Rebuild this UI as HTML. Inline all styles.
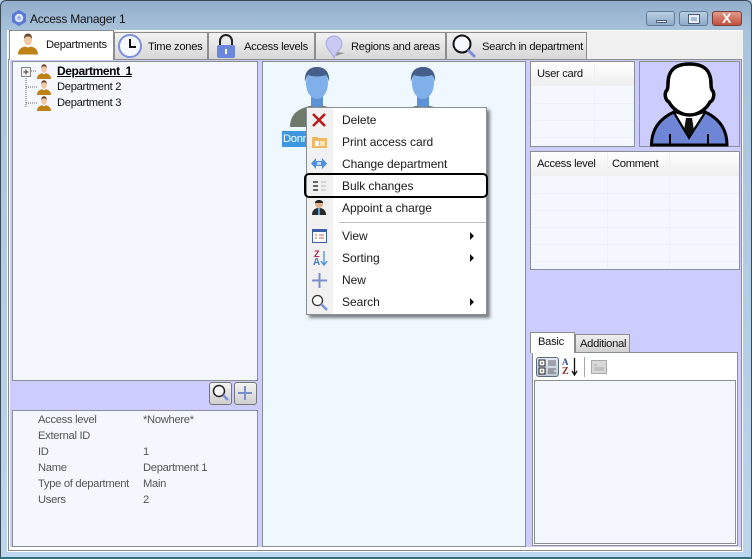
<!DOCTYPE html>
<html><head><meta charset="utf-8">
<style>
html,body{margin:0;padding:0}
body{width:752px;height:559px;overflow:hidden;position:relative;background:#b4d0e8;font-family:"Liberation Sans",sans-serif;font-size:12px;color:#111}
.a{position:absolute;box-sizing:border-box}
.t{position:absolute;white-space:nowrap;line-height:14px;font-size:11.2px;letter-spacing:-.3px}
.tab{position:absolute;top:32px;height:27px;box-sizing:border-box;background:linear-gradient(#f2f2f2,#d8d8d8);border:1px solid #8c8c8c;border-bottom:none}
.panel{position:absolute;box-sizing:border-box;border:1px solid #8a8f94;background:#f4f7fd}
svg{position:absolute;overflow:visible}
.m{position:absolute;left:342px;white-space:nowrap;font-size:12px;line-height:14px;color:#1a1a1a;letter-spacing:-.05px}
.ar{position:absolute;left:470px;width:0;height:0;border-left:4px solid #111;border-top:4px solid transparent;border-bottom:4px solid transparent}
.i{color:#555}
.hl{position:absolute;height:1px;background:#eef0f4}
.vl{position:absolute;width:1px;background:#eef0f4}
</style></head><body>
<svg width="0" height="0" style="position:absolute"><defs>
<g id="user"><ellipse cx="10" cy="6.5" rx="4" ry="5.5" fill="#f0c8a4"/><path d="M6 5.5C5.8 1.5 8 0 10 0s4.2 1.500 4 5.500C13 3.500 12 3 10 3S7 3.500 6 5.500z" fill="#6b4a2c"/><path d="M0 21c0-5 3-7 7-8l3 1 3-1c4 1 7 3 7 8z" fill="#bf8215"/></g>
<g id="blue"><path d="M-15 60c0-12 7-17 16-20l11-3 11 3c9 3 16 8 16 20z" fill="#6e7a6a"/><path d="M6 28h12v10l-6 5-6-5z" fill="#5e92d6"/><ellipse cx="12" cy="16" rx="11" ry="16" fill="#7fb0ea"/><path d="M0 15C-1 5 4 0 12 0s13 5 12 15c-1-4-2-6-3-7-5 2-13 2-18 0-1 1-2 3-3 7z" fill="#465f8a"/></g>
</defs></svg>

<!-- window frame -->
<div class="a" style="left:0;top:0;width:752px;height:559px;background:linear-gradient(#93aecb 0,#a9c3dc 30px,#bcd6ee 100%);border:1px solid #3a4a55;border-bottom:none;border-radius:6px 6px 0 0"></div>
<div class="a" style="left:0;top:557px;width:752px;height:2px;background:#2f6f80"></div>
<div class="a" style="left:7px;top:30px;width:736px;height:522px;background:#fff"></div>
<div class="a" style="left:8px;top:31px;width:735px;height:28px;background:#f0f0f0"></div>
<div class="a" style="left:8px;top:59px;width:734px;height:492px;background:#fff;border:1px solid #8c8c8c"></div>
<div class="a" style="left:10px;top:60px;width:731px;height:487px;background:#ccccff"></div>

<!-- title -->
<svg style="left:11px;top:10px" width="16" height="16" viewBox="0 0 16 16"><path d="M8 0l7 4v8l-7 4-7-4V4z" fill="#5a78d8"/><circle cx="8" cy="8" r="4.200" fill="#dfe9f8"/><circle cx="8" cy="8" r="2" fill="#9fb4e8"/></svg>
<div class="t" style="left:30px;top:12px;font-size:12px;letter-spacing:-.25px;color:#111">Access Manager 1</div>

<!-- window buttons -->
<div class="a" style="left:646px;top:11px;width:29px;height:15px;border:1px solid #5f7a96;border-radius:3px;background:linear-gradient(#b9cfe4,#8eabc8)"><div class="a" style="left:9px;top:8px;width:11px;height:3px;background:#eef;border:1px solid #4a5f78"></div></div>
<div class="a" style="left:679px;top:11px;width:29px;height:15px;border:1px solid #5f7a96;border-radius:3px;background:linear-gradient(#b9cfe4,#8eabc8)"><div class="a" style="left:9px;top:3px;width:10px;height:8px;border:2px solid #eef;outline:1px solid #4a5f78"></div></div>
<div class="a" style="left:712px;top:11px;width:30px;height:15px;border:1px solid #7a3f36;border-radius:3px;background:linear-gradient(#e09a8a,#c4503c)"></div>
<div class="t" style="left:722px;top:11px;font-weight:bold;color:#fff;font-size:14px;letter-spacing:0">X</div>

<!-- tabs -->
<div class="tab" style="left:114px;width:94px"></div>
<div class="tab" style="left:208px;width:107px"></div>
<div class="tab" style="left:315px;width:131px"></div>
<div class="tab" style="left:446px;width:141px"></div>
<div class="a" style="left:9px;top:30px;width:105px;height:30px;background:#fff;border:1px solid #8c8c8c;border-bottom:none"></div>
<div class="t" style="left:46px;top:38px">Departments</div>
<div class="t" style="left:148px;top:40px">Time zones</div>
<div class="t" style="left:244px;top:40px">Access levels</div>
<div class="t" style="left:351px;top:40px">Regions and areas</div>
<div class="t" style="left:482px;top:40px">Search in department</div>
<svg style="left:18px;top:33px" width="20" height="23" viewBox="0 0 20 22"><use href="#user"/></svg>
<svg style="left:117px;top:33px" width="26" height="26" viewBox="0 0 26 26"><circle cx="13" cy="13" r="11" fill="#f6f8ff" stroke="#7b8fdc" stroke-width="2"/><path d="M13 6v8h6" fill="none" stroke="#111" stroke-width="2"/></svg>
<svg style="left:216px;top:34px" width="20" height="25" viewBox="0 0 20 25"><path d="M4 12V7a6 6 0 0 1 12 0v5" fill="none" stroke="#222" stroke-width="2"/><rect x="1" y="11" width="18" height="13" rx="2" fill="#6c86dc"/><rect x="9" y="15" width="2" height="5" fill="#fff"/></svg>
<svg style="left:324px;top:36px" width="22" height="23" viewBox="0 0 22 23"><path d="M10 22c-2-6-8-9-8-14a8 8 0 0 1 16 0c0 5-6 8-8 14z" fill="#c9c9f4" stroke="#a6a6e4"/><path d="M12 20l9-3-8-1z" fill="#9a9a9a"/></svg>
<svg style="left:452px;top:34px" width="26" height="24" viewBox="0 0 26 24"><circle cx="10" cy="10" r="8.500" fill="#f6f8ff" stroke="#111" stroke-width="2"/><path d="M16 16l7 7" stroke="#7b8fdc" stroke-width="3"/></svg>

<!-- left tree -->
<div class="panel" style="left:12px;top:61px;width:246px;height:320px"></div>
<svg style="left:20px;top:66px" width="30" height="44"><path d="M6 10v31M11 5h6M6 21h11M6 37h11" stroke="#666" stroke-dasharray="1 1" fill="none"/><rect x="1.500" y="1.500" width="9" height="9" fill="#f4f4f4" stroke="#888"/><path d="M3.500 6h5M6 3.500v5" stroke="#333"/></svg>
<svg style="left:37px;top:64px" width="14" height="16" viewBox="0 0 20 22"><use href="#user"/></svg>
<svg style="left:37px;top:80px" width="14" height="16" viewBox="0 0 20 22"><use href="#user"/></svg>
<svg style="left:37px;top:96px" width="14" height="16" viewBox="0 0 20 22"><use href="#user"/></svg>
<div class="t" style="left:57px;top:64px;font-weight:bold;text-decoration:underline;color:#000;font-size:12px;letter-spacing:-.4px">Department&nbsp; 1</div>
<div class="t" style="left:57px;top:80px">Department 2</div>
<div class="t" style="left:57px;top:96px">Department 3</div>

<!-- tool buttons -->
<div class="a" style="left:209px;top:382px;width:23px;height:23px;border:1px solid #777;border-radius:3px;background:linear-gradient(#f4f4f4,#cfcfcf)"></div>
<svg style="left:212px;top:384px" width="18" height="18" viewBox="0 0 18 18"><circle cx="7" cy="7" r="5.500" fill="#fff" stroke="#222" stroke-width="1.500"/><path d="M11 11l5 5" stroke="#7b8fdc" stroke-width="2.500"/></svg>
<div class="a" style="left:234px;top:382px;width:23px;height:23px;border:1px solid #777;border-radius:3px;background:linear-gradient(#f4f4f4,#cfcfcf)"></div>
<svg style="left:237px;top:385px" width="16" height="16"><path d="M8 1v14M1 8h14" stroke="#7a8fce" stroke-width="2"/></svg>

<!-- info -->
<div class="panel" style="left:12px;top:410px;width:246px;height:137px"></div>
<div class="t i" style="left:38px;top:413px">Access level</div><div class="t i" style="left:143px;top:413px">*Nowhere*</div>
<div class="t i" style="left:38px;top:429px">External ID</div>
<div class="t i" style="left:38px;top:445px">ID</div><div class="t i" style="left:143px;top:445px">1</div>
<div class="t i" style="left:38px;top:461px">Name</div><div class="t i" style="left:143px;top:461px">Department 1</div>
<div class="t i" style="left:38px;top:477px">Type of department</div><div class="t i" style="left:143px;top:477px">Main</div>
<div class="t i" style="left:38px;top:493px">Users</div><div class="t i" style="left:143px;top:493px">2</div>

<!-- middle -->
<div class="panel" style="left:262px;top:61px;width:264px;height:486px;background:#f0f8ff"></div>
<svg style="left:305px;top:67px" width="26" height="62"><use href="#blue"/></svg>
<svg style="left:411px;top:67px" width="26" height="62"><use href="#blue"/></svg>
<div class="a" style="left:282px;top:131px;width:40px;height:16px;background:#3f97e0"></div>
<div class="t" style="left:283px;top:132px;color:#fff">Donn</div>

<!-- context menu -->
<div class="a" style="left:306px;top:107px;width:181px;height:208px;background:#fff;border:1px solid #8a8f94;box-shadow:3px 3px 3px #7e8186"></div>
<div class="a" style="left:307px;top:108px;width:26px;height:206px;background:#f1f1f1"></div>
<div class="a" style="left:339px;top:222px;width:147px;height:1px;background:#c0c0c0"></div>
<div class="m" style="top:113px">Delete</div>
<div class="m" style="top:135px">Print access card</div>
<div class="m" style="top:157px">Change department</div>
<div class="m" style="top:179px">Bulk changes</div>
<div class="m" style="top:201px">Appoint a charge</div>
<div class="m" style="top:229px">View</div>
<div class="m" style="top:251px">Sorting</div>
<div class="m" style="top:273px">New</div>
<div class="m" style="top:295px">Search</div>
<div class="ar" style="top:232px"></div><div class="ar" style="top:254px"></div><div class="ar" style="top:298px"></div>
<svg style="left:311px;top:112px" width="16" height="16"><path d="M2 2l12 12M14 2L2 14" stroke="#b81c1c" stroke-width="2.600"/></svg>
<svg style="left:312px;top:135px" width="15" height="14"><path d="M0 2h6v1h9v10H0z" fill="#f0b860"/><rect x="3" y="6" width="4" height="5" fill="#fff"/><rect x="8" y="6" width="5" height="5" fill="#fbe3b0"/></svg>
<svg style="left:311px;top:157px" width="16" height="13"><path d="M0 6.500L5 1v3h6V1l5 5.500L11 12V9H5v3z" fill="#4a90dc"/><path d="M6 5h4v3H6z" fill="#c8d8f0"/></svg>
<svg style="left:312px;top:180px" width="15" height="12"><path d="M1 1h5v2H1zM1 5h5v2H1zM1 9h5v2H1z" fill="#666"/><path d="M9 1h5v2H9zM9 5h5v2H9zM9 9h5v2H9z" fill="#d4d4d4"/></svg>
<svg style="left:311px;top:199px" width="16" height="17"><circle cx="8" cy="5" r="4" fill="#e0b088"/><path d="M4 4c0-4 8-4 8 0z" fill="#222"/><path d="M1 16c0-5 3-7 7-7s7 2 7 7z" fill="#2a2a2a"/><path d="M7 9h2v7H7z" fill="#5aa0d8"/></svg>
<svg style="left:312px;top:229px" width="15" height="14"><rect x=".5" y=".5" width="14" height="13" fill="#fff" stroke="#3a5ea8"/><rect x="1" y="1" width="13" height="2" fill="#3a5ea8"/><path d="M3 6h2M7 6h5M3 9h2M7 9h5" stroke="#c06040"/></svg>
<div class="t" style="left:314px;top:250px;font-size:9px;font-weight:bold;color:#b02050;line-height:9px;letter-spacing:0">Z</div>
<div class="t" style="left:313px;top:258px;font-size:10px;font-weight:bold;color:#4a7ac0;line-height:10px;letter-spacing:0">A</div>
<svg style="left:321px;top:251px" width="6" height="15"><path d="M3 0v14M0 10l3 4 3-4" stroke="#4a90dc" fill="none" stroke-width="1.300"/></svg>
<svg style="left:312px;top:273px" width="15" height="15"><path d="M7.500 0v15M0 7.500h15" stroke="#7a8fce" stroke-width="2"/></svg>
<svg style="left:311px;top:294px" width="17" height="17"><circle cx="6.500" cy="6.500" r="5" fill="#fff" stroke="#333" stroke-width="1.300"/><path d="M10 10l6 6" stroke="#7b8fdc" stroke-width="2.500"/></svg>
<div class="a" style="left:304px;top:173px;width:184px;height:25px;border:2.500px solid #000;border-radius:5px"></div>

<!-- user card -->
<div class="panel" style="left:530px;top:61px;width:105px;height:86px;background:#f4f7fd">
<div class="a" style="left:0;top:0;width:103px;height:23px;background:linear-gradient(#fff,#efefef)"></div>
<div class="hl" style="left:0;top:23px;width:103px"></div><div class="hl" style="left:0;top:41px;width:103px"></div><div class="hl" style="left:0;top:58px;width:103px"></div><div class="hl" style="left:0;top:75px;width:103px"></div>
<div class="vl" style="left:63px;top:0;height:84px"></div></div>
<div class="t" style="left:537px;top:67px">User card</div>
<div class="panel" style="left:639px;top:61px;width:101px;height:86px;background:#ccccff"></div>
<svg style="left:650px;top:62px" width="78" height="84" viewBox="0 0 78 84">
<path d="M1.500 83C1.500 66 11 56 24 50l15 25 16-25c13 6 22 16 22 33z" fill="#6f86d6" stroke="#000" stroke-width="3"/>
<path d="M24 50l15 25 16-25-9 3H33z" fill="#fff" stroke="#000" stroke-width="1.500"/><path d="M36 56h6l2 12-5 6-5-6z" fill="#111"/>
<path d="M20 83V72M58 83V72" stroke="#000" stroke-width="2"/>
<path d="M39.500 2C25 2 18 8 18 22C18 25 18 26 17 28C14 31 15 38 19 40C22 46 30 53 39.500 53C49 53 57 46 60 40C64 38 65 31 62 28C61 26 61 25 61 22C61 8 54 2 39.500 2z" fill="#fff" stroke="#000" stroke-width="3.500"/>
</svg>

<!-- access level table -->
<div class="panel" style="left:530px;top:151px;width:210px;height:119px">
<div class="a" style="left:0;top:0;width:208px;height:23px;background:linear-gradient(#fff,#efefef)"></div>
<div class="hl" style="left:0;top:23px;width:208px"></div><div class="hl" style="left:0;top:41px;width:208px"></div><div class="hl" style="left:0;top:58px;width:208px"></div><div class="hl" style="left:0;top:75px;width:208px"></div><div class="hl" style="left:0;top:92px;width:208px"></div><div class="hl" style="left:0;top:109px;width:208px"></div>
<div class="vl" style="left:76px;top:0;height:117px"></div><div class="vl" style="left:138px;top:0;height:117px"></div></div>
<div class="t" style="left:537px;top:157px">Access level</div>
<div class="t" style="left:612px;top:157px">Comment</div>

<!-- property tabs -->
<div class="a" style="left:575px;top:334px;width:55px;height:19px;background:linear-gradient(#efefef,#d2d2d2);border:1px solid #8c8c8c"></div>
<div class="panel" style="left:532px;top:352px;width:206px;height:194px;background:#fff"></div>
<div class="a" style="left:530px;top:332px;width:45px;height:21px;background:#fff;border:1px solid #8c8c8c;border-bottom:none"></div>
<div class="t" style="left:538px;top:335px">Basic</div>
<div class="t" style="left:580px;top:337px">Additional</div>
<div class="a" style="left:536px;top:357px;width:23px;height:20px;background:linear-gradient(#e6ecf5,#bcc6d6);border:1px solid #5a6a80;border-radius:3px"></div>
<svg style="left:538px;top:359px" width="20" height="17"><rect x="1" y="1" width="6" height="6" fill="#fff" stroke="#222"/><rect x="1" y="9" width="6" height="6" fill="#fff" stroke="#222"/><path d="M3 4h2M3 12h2" stroke="#222"/><path d="M10 2h8M10 4h8M10 6h8M10 10h8M10 12h6M10 14h8" stroke="#666"/></svg>
<div class="t" style="left:562px;top:358px;font:bold 9px/9px 'Liberation Serif',serif;color:#2a4a8a;letter-spacing:0">A</div>
<div class="t" style="left:562px;top:367px;font:bold 10px/10px 'Liberation Serif',serif;color:#8a2a2a;letter-spacing:0">Z</div>
<svg style="left:571px;top:358px" width="7" height="18"><path d="M3.500 0v17M1 13l2.500 4 2.500-4" stroke="#111" fill="none" stroke-width="1.300"/></svg>
<div class="a" style="left:584px;top:357px;width:1px;height:20px;background:#a8a8a8"></div>
<svg style="left:591px;top:359px" width="16" height="15"><rect x=".5" y="1.500" width="15" height="13" fill="#d8d8d8" stroke="#aaa"/><path d="M3 6h3M3 9h10M3 11h10" stroke="#aaa"/></svg>
<div class="panel" style="left:534px;top:380px;width:202px;height:164px"></div>
</body></html>
